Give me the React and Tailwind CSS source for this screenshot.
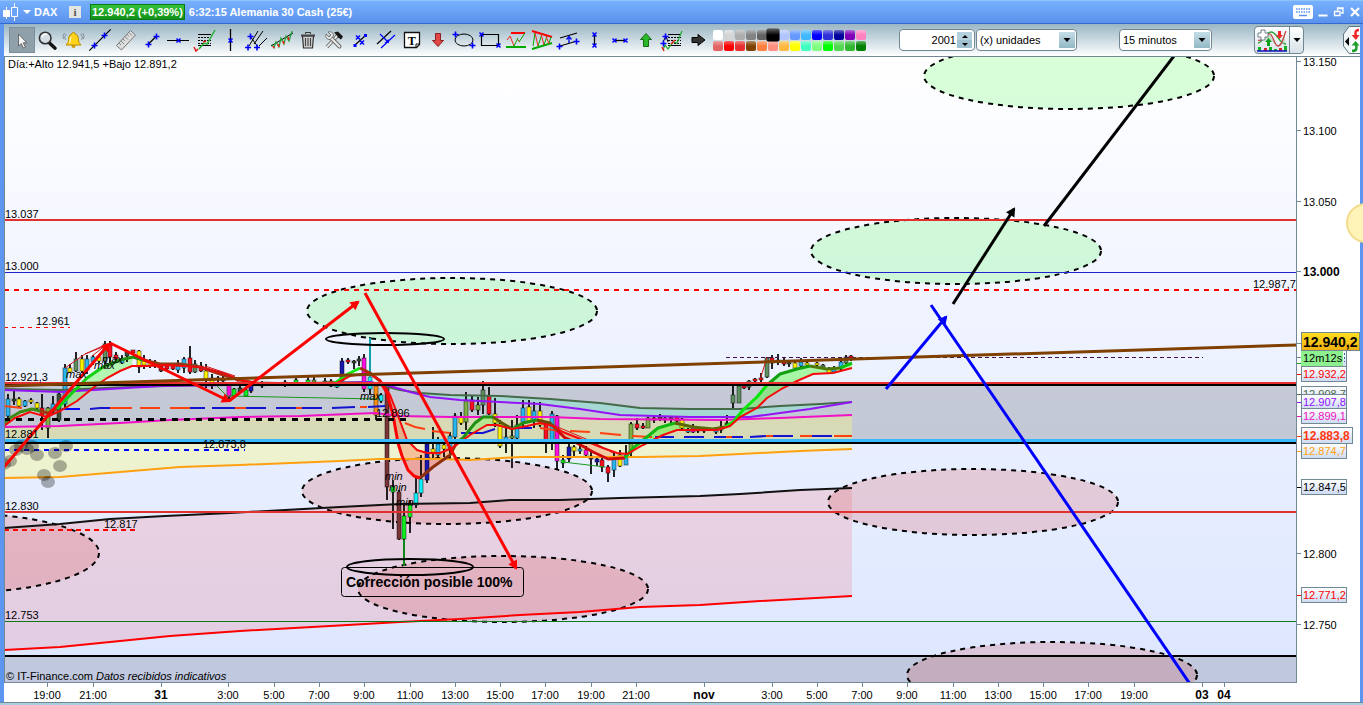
import {useState} from 'react';

const BLUE = '#0000ff';

function Plus({x, y}) {
    return <path d={`M${x - 3} ${y}h6M${x} ${y - 3}v6`} stroke={BLUE} strokeWidth="1.6" fill="none" />
}

function Cross({x, y}) {
    return <path d={`M${x - 2} ${y - 2}l4 4M${x + 2} ${y - 2}l-4 4`} stroke={BLUE} strokeWidth="1.5" fill="none" />
}

// Every icon is drawn on a 26 x 26 box
const tools = [
    {name: 'Seleccionar', icon: <path d="M9.5 7v12l2.8-2.4 2.2 4.6 2-1-2.2-4.4h3.6z" fill="#f4f4f4" stroke="#5c5c5c" strokeWidth=".9" />},
    {name: 'Zoom', icon: <>
        <path d="M14.5 16l5.6 5.2" stroke="#111" strokeWidth="3.4" strokeLinecap="round" />
        <circle cx="10.2" cy="11" r="5.8" fill="#d3dde3" stroke="#333" strokeWidth="1.6" />
        <path d="M7 10a4 4 0 0 1 5-2.6" stroke="#fff" strokeWidth="1.6" fill="none" />
    </>},
    {name: 'Alerta', icon: <>
        <circle cx="12.5" cy="19" r="2" fill="#d19c00" />
        <path d="M12.5 5.5c1 0 1.5.6 1.5 1.5 2.6.7 3.5 3 3.5 5.5 0 2.5.8 3.5 2.5 5.5h-15c1.700-2 2.500-3 2.500-5.500 0-2.500.9-4.800 3.500-5.500 0-.9.5-1.500 1.500-1.500z" fill="#ffd21c" stroke="#b88a00" />
        <path d="M10 10c-1 2-.5 4-1.500 6" stroke="#fff2a8" strokeWidth="1.500" fill="none" />
        <path d="M5.500 7l-2 3 1 3M19.500 7l2 3-1 3M3.500 6l-1.500 3 .5 3M21.500 6l1.500 3-.5 3" stroke="#68777f" fill="none" strokeWidth=".7" />
    </>},
    {name: 'Recta', icon: <><path d="M2.300 23.700L23.700 2.300" stroke="#000" strokeWidth="1.200" /><Plus x={7.5} y={18.5} /><Plus x={17.5} y={8.500} /></>},
    {name: 'Regla', icon: <>
        <path d="M3.500 18.500L17.500 3.500l5 4.500-14 15z" fill="#ddd" stroke="#777" />
        <path d="M6 16l2 2M8 14l3 3M10 12l2 2M12 9.500l3 3M14 7.500l2 2M16 5.500l3 3" stroke="#777" strokeWidth=".9" />
    </>},
    {name: 'Segmento', icon: <><path d="M9.500 17L17.500 9" stroke="#000" strokeWidth="1.200" /><Plus x={9.500} y={17.500} /><Plus x={17.500} y={9.500} /></>},
    {name: 'Horizontal', icon: <><path d="M2 13.500h22" stroke="#000" /><Cross x={13.500} y={13.500} /></>},
    {name: 'Fibonacci', icon: <>
        <path d="M7 7.500h13M7 18.500h13" stroke="#000" />
        <path d="M7 10.500h13M7 13.500h13M7 16.500h13" stroke="#000" strokeDasharray="2 1" />
        <path d="M8 22l5-6 3 1 4-7 4-7" stroke="#22b030" strokeWidth="1.500" fill="none" />
        <path d="M3 20l2 4 2-2M12 15l3-1" stroke="#e01818" strokeWidth="1.500" fill="none" />
    </>},
    {name: 'Vertical', icon: <><path d="M13.500 2v22" stroke="#000" strokeWidth="1.300" /><Cross x={13.500} y={13.500} /></>},
    {name: 'Tridente', icon: <>
        <path d="M6 19L15 4M11 17L20 4M16 19l8-8M7 9l8 11" stroke="#000" fill="none" />
        <Plus x={5} y={20.500} /><Plus x={14} y={20.500} /><Plus x={7.500} y={9.500} />
    </>},
    {name: 'Regresión', icon: <>
        <path d="M2 19L24 6" stroke="#000" />
        <path d="M3 17l2 4 2-6 3 5 2-9 3 6 2-8 3 5 3-10" stroke="#22a033" strokeWidth="1.200" fill="none" />
        <path d="M4 19l1 2M9 17l1 3M14 14l1 3M19 10l1 3" stroke="#f02020" strokeWidth="1.600" />
    </>},
    {name: 'Borrar', icon: <>
        <path d="M7.500 9h11l-1 12h-9z" fill="#ccc" stroke="#333" strokeWidth="1.200" />
        <path d="M6 8.500h14" stroke="#444" strokeWidth="2" /><path d="M10.500 7v-1.500h5v1.500" stroke="#333" fill="none" />
        <path d="M10.500 11v8M13 11v8M15.500 11v8" stroke="#444" strokeWidth="1.100" />
    </>},
    {name: 'Herramientas', icon: <>
        <path d="M6 20L17 8" stroke="#777" strokeWidth="3.600" /><path d="M6 20L17 8" stroke="#eee" strokeWidth="1.800" />
        <path d="M13 5.500l4-1 5 5-2 3-3-2-1-2z" fill="#161616" />
        <path d="M9.500 10.500l9 9" stroke="#666" strokeWidth="4" strokeLinecap="round" /><path d="M9.500 10.500l9 9" stroke="#e7e7e7" strokeWidth="2.200" strokeLinecap="round" />
        <path d="M5 7l3 3 2-2-3-3c3-1 6 1 5.500 4L9 12.500C6 13 4 10 5 7z" fill="#e4e4e4" stroke="#666" strokeWidth=".8" />
    </>},
    {name: 'Unir puntos', icon: <>
        <path d="M8 18L19 8" stroke="#000" strokeWidth="1.200" />
        <path d="M6.500 17h3v3h-3zM17 7h3v3h-3z" fill={BLUE} /><Cross x={11} y={10.500} /><Cross x={15} y={15.500} />
    </>},
    {name: 'Paralelas', icon: <>
        <path d="M4 17L18 4" stroke="#000" strokeWidth="1.200" /><path d="M8 21L22 8M7 7l8 8" stroke={BLUE} strokeWidth="1.200" />
        <path d="M16 16h-4.500l4-4z" fill={BLUE} />
    </>},
    {name: 'Texto', icon: <>
        <path d="M5.500 5.500h15v12l-3 3h-12z" fill="#fff" stroke="#111" strokeWidth="1.300" /><path d="M20.500 17h-3.500v3.500" fill="none" stroke="#111" />
        <text x="12.700" y="17.500" textAnchor="middle" fontSize="12" fontWeight="700" fontFamily="Liberation Serif, serif">T</text>
    </>},
    {name: 'Flecha abajo', icon: <path d="M10.500 6.500h5v7h3l-5.500 6-5.500-6h3z" fill="#e04848" stroke="#8c2020" />},
    {name: 'Elipse', icon: <><ellipse cx="13" cy="13" rx="9" ry="6" fill="none" stroke="#000" /><Plus x={4.500} y={7.500} /><Plus x={21.500} y={18.500} /></>},
    {name: 'Rectángulo', icon: <><path d="M4.500 7.500h17v11h-17z" fill="none" stroke="#000" strokeWidth="1.200" /><Cross x={4.500} y={7.500} /><Cross x={21.500} y={18.500} /></>},
    {name: 'Canal', icon: <>
        <path d="M8 6h14" stroke="#f00" strokeWidth="2" /><path d="M3 20h20" stroke="#0a0" strokeWidth="2" />
        <path d="M4 13l3-4 4 10M14 12l3 3" stroke="#e22" fill="none" /><path d="M11 19l4-8M16 15l6-9" stroke="#0a0" fill="none" />
    </>},
    {name: 'Triángulo', icon: <>
        <path d="M3 4l20 6" stroke="#f00" strokeWidth="2" /><path d="M3 22l20-6" stroke="#0a0" strokeWidth="2" />
        <path d="M4 19L6 6M9 19l4-12M15 18l3-9M20 16l2-6" stroke="#0a0" /><path d="M6 6l3 13M12 7l3 11M17 9l3 8" stroke="#e22" />
    </>},
    {name: 'Canal paralelo', icon: <>
        <path d="M5 11L22 6M5 19L22 14" stroke="#000" strokeWidth="1.200" /><path d="M14 16v-5M11.500 12.500L14 9.500l2.500 3" stroke={BLUE} fill="none" strokeWidth="1.300" />
        <Plus x={4.500} y={19.500} /><Plus x={21.500} y={14.500} />
    </>},
    {name: 'Medir vertical', icon: <><path d="M13.500 7v12" stroke="#000" strokeWidth="1.300" /><Cross x={13.500} y={7.500} /><Cross x={13.500} y={18.500} /></>},
    {name: 'Medir horizontal', icon: <><path d="M8 13.500h11" stroke="#000" strokeWidth="1.300" /><Cross x={7.500} y={13.500} /><Cross x={18.500} y={13.500} /></>},
    {name: 'Flecha arriba', icon: <path d="M10.500 19.500h5v-7h3L13 6.500l-5.500 6h3z" fill="#28b828" stroke="#126a12" />},
    {name: 'Retrocesos', icon: <>
        <path d="M9 7.500h13M9 18.500h13" stroke="#000" /><path d="M9 10.500h13M9 13.500h13M9 16.500h13" stroke="#000" strokeDasharray="2 1" />
        <path d="M4 15l3-6 2 6" stroke="#000" fill="none" /><path d="M4 23l2-5 3 4 5-7 4 1 5-12" stroke="#1cab2c" strokeWidth="1.200" fill="none" />
        <path d="M3 20l2 4M12 17l4-4" stroke="#e22" strokeWidth="1.500" /><Plus x={6.500} y={9.500} /><Plus x={4.500} y={16.500} />
    </>},
    {name: 'Flecha derecha', icon: <path d="M7 10.500h6v-3l7 5.500-7 5.500v-3H7z" fill="#333" stroke="#000" />},
];

const palette = [
    '#ffffff', '#d4d4d4', '#adadad', '#828282', '#636363', '#000000', '#b0c4ff', '#6699ff', '#40b8ff', '#0000ff', '#3030d8', '#00009c', '#8000b8', '#ff80c0',
    '#e06464', '#ff0000', '#e83030', '#804000', '#ff8040', '#ff9080', '#ffb840', '#ffff00', '#40ffc0', '#80ff80', '#00ff00', '#50d850', '#30b830', '#008000',
];

// x, high, low, body top, body bottom, colour
const Y = '#ffef00', B = '#29b6f0', R = '#ff1020', G = '#5f8f60', D = '#3a5038', O = '#7cb040', M = '#ff10e0', N = '#1818b0', C = '#10f0f8', L = '#10f020', W = '#7a3438', A = '#ff9010';
const candles = [
    [8, 394, 418, 399, 416, B], [14, 390, 405, 399, 401, D], [19, 397, 407, 399, 406, Y], [25, 400, 407, 401, 406, B], [31, 398, 404, 400, 402, Y],
    [37, 402, 410, 403, 408, Y], [42, 394, 430, 408, 415, R], [48, 407, 438, 408, 428, O], [53, 396, 414, 404, 412, B], [59, 393, 422, 394, 420, D],
    [65, 364, 410, 368, 404, B], [70, 364, 373, 368, 372, Y], [76, 352, 372, 359, 371, G], [82, 355, 373, 359, 371, Y], [87, 355, 374, 359, 370, B],
    [93, 355, 365, 357, 362, B], [99, 355, 363, 357, 361, Y], [105, 341, 368, 344, 361, G], [110, 341, 363, 345, 357, R], [116, 352, 361, 355, 359, R],
    [122, 355, 364, 359, 363, B], [127, 350, 362, 352, 356, D], [133, 350, 354, 350, 353, R], [139, 350, 373, 351, 367, Y], [144, 355, 369, 360, 365, Y],
    [150, 359, 368, 362, 365, Y], [155, 360, 368, 363, 366, D], [161, 363, 372, 366, 371, W], [167, 363, 371, 366, 369, R], [173, 364, 370, 366, 369, R],
    [178, 360, 373, 366, 370, B], [184, 357, 373, 359, 368, B], [190, 346, 374, 358, 372, R], [195, 360, 373, 364, 372, G], [201, 362, 372, 366, 371, R],
    [206, 364, 388, 371, 380, Y], [212, 374, 389, 378, 384, Y], [218, 376, 382, 378, 380, B], [223, 376, 386, 379, 381, D], [229, 384, 401, 385, 397, M],
    [234, 388, 398, 389, 396, L], [240, 384, 394, 388, 392, D], [246, 387, 397, 390, 396, L], [251, 383, 393, 385, 391, N], [262, 381, 388, 383, 386, Y],
    [285, 380, 387, 382, 385, M], [296, 377, 386, 380, 383, L], [308, 375, 385, 380, 383, L], [314, 377, 385, 380, 382, O], [325, 378, 385, 381, 383, G],
    [331, 379, 387, 381, 386, A], [337, 383, 388, 385, 387, C], [342, 358, 382, 361, 381, N], [348, 358, 364, 360, 362, R], [354, 360, 369, 361, 363, D],
    [359, 356, 366, 359, 361, D], [364, 354, 392, 358, 389, M], [370, 337, 395, 377, 389, C], [376, 383, 420, 386, 415, A], [381, 393, 403, 395, 401, C],
    [387, 385, 500, 386, 487, W], [393, 480, 529, 487, 492, L], [399, 490, 540, 492, 539, W], [404, 505, 566, 516, 539, L], [410, 500, 533, 505, 517, L],
    [416, 478, 508, 493, 505, C], [421, 455, 497, 479, 493, C], [427, 443, 483, 444, 480, N], [433, 427, 458, 449, 452, Y], [438, 437, 460, 444, 455, B],
    [444, 440, 457, 445, 449, Y], [450, 432, 460, 436, 450, B], [455, 413, 440, 416, 437, B], [461, 412, 425, 417, 423, Y], [466, 392, 430, 401, 422, O],
    [472, 395, 412, 400, 410, R], [478, 397, 415, 405, 410, O], [483, 381, 414, 390, 405, G], [489, 387, 415, 396, 414, R], [495, 398, 427, 414, 423, Y],
    [500, 420, 448, 424, 446, Y], [506, 425, 453, 437, 443, B], [512, 420, 468, 436, 438, O], [517, 415, 439, 425, 438, B], [523, 400, 428, 408, 422, B],
    [529, 400, 422, 407, 421, Y], [534, 402, 428, 411, 420, B], [540, 402, 427, 411, 425, Y], [546, 421, 453, 423, 443, R], [552, 411, 450, 414, 440, B],
    [557, 415, 470, 416, 461, M], [563, 455, 468, 460, 463, L], [569, 443, 462, 447, 459, N], [574, 445, 456, 447, 451, Y], [580, 445, 454, 449, 451, B],
    [586, 446, 458, 450, 455, M], [591, 450, 474, 456, 459, W], [597, 457, 466, 459, 462, N], [602, 456, 472, 460, 467, R], [608, 465, 482, 467, 473, R],
    [614, 452, 477, 459, 470, B], [620, 450, 467, 455, 466, Y], [626, 445, 465, 455, 465, B], [631, 422, 457, 424, 452, O], [637, 418, 430, 424, 428, R],
    [643, 423, 429, 426, 428, R], [648, 417, 428, 418, 428, O], [654, 416, 423, 418, 420, R], [660, 414, 421, 417, 419, W], [665, 416, 423, 418, 420, M],
    [671, 416, 423, 417, 419, W], [677, 416, 425, 417, 421, R], [682, 418, 430, 419, 428, Y], [688, 428, 433, 430, 432, B], [693, 424, 433, 428, 432, M],
    [698, 427, 433, 429, 431, W], [704, 427, 433, 429, 431, D], [716, 427, 434, 429, 432, B], [721, 421, 433, 427, 430, O], [727, 415, 427, 423, 425, D],
    [733, 385, 409, 395, 403, G], [739, 385, 403, 386, 403, G], [744, 385, 389, 386, 388, R], [749, 380, 390, 381, 387, G], [755, 378, 382, 379, 381, R],
    [761, 373, 382, 378, 380, R], [767, 357, 378, 358, 377, G], [772, 355, 369, 358, 363, R], [778, 354, 365, 360, 362, D], [784, 357, 366, 362, 364, R],
    [789, 361, 367, 362, 364, D], [795, 361, 370, 363, 368, Y], [801, 358, 368, 362, 366, B], [807, 362, 366, 363, 365, Y], [817, 362, 367, 363, 365, Y],
    [823, 364, 369, 365, 367, G], [829, 367, 374, 369, 373, Y], [834, 366, 373, 369, 372, B], [841, 360, 370, 362, 368, B], [846, 355, 364, 357, 363, G],
    [851, 355, 361, 356, 358, R],
];

const slowGreen = [[4, 389], [60, 390], [130, 387], [240, 384], [370, 382], [380, 385], [400, 390], [420, 393], [450, 395], [500, 396], [550, 399], [600, 403], [640, 408], [690, 409], [740, 409], [780, 406], [820, 404], [852, 402]];
const slowPurple = [[4, 390], [60, 392], [110, 389], [160, 386], [230, 385], [300, 384], [370, 382], [390, 386], [410, 392], [430, 397], [460, 400], [500, 402], [540, 404], [580, 409], [620, 415], [690, 417], [750, 417], [780, 413], [810, 409], [852, 402]];
const magenta = [[4, 427], [60, 426], [120, 423], [170, 420], [240, 417], [300, 416], [350, 414], [375, 413], [400, 416], [450, 417], [550, 417], [600, 419], [720, 420], [780, 418], [852, 415]];
const orange = [[4, 478], [60, 477], [120, 472], [180, 467], [240, 465], [340, 461], [380, 459], [440, 459], [470, 460], [520, 457], [640, 457], [700, 456], [740, 454], [800, 451], [852, 449]];
const blackAvg = [[4, 528], [60, 524], [110, 519], [165, 516], [230, 513], [340, 507], [400, 504], [470, 503], [510, 500], [560, 500], [620, 498], [700, 496], [740, 494], [800, 490], [852, 488]];
const redAvg = [[4, 650], [60, 647], [120, 641], [170, 636], [240, 631], [330, 626], [400, 622], [460, 619], [520, 615], [580, 612], [640, 607], [700, 605], [760, 601], [852, 596]];

// fast average, cut where its colour changes
const fast = [
    {color: '#3c8a10', pts: [[4, 425], [10, 418], [20, 412], [32, 409], [40, 411]]},
    {color: '#a03c10', pts: [[40, 411], [48, 413], [57, 409]]},
    {color: '#10d010', pts: [[57, 409], [72, 393], [87, 378], [103, 367]]},
    {color: '#209010', pts: [[103, 367], [120, 360], [133, 357], [143, 360]]},
    {color: '#8c3c10', pts: [[143, 360], [160, 364], [180, 364], [200, 367], [217, 373], [240, 380], [255, 383], [300, 384], [335, 383]]},
    {color: '#10e810', pts: [[335, 383], [348, 374], [360, 368]]},
    {color: '#a03010', pts: [[360, 368], [370, 373], [380, 381]]},
    {color: '#ff0000', pts: [[380, 381], [387, 393], [393, 415], [398, 443], [402, 456], [408, 470], [414, 476], [420, 478]]},
    {color: '#8c3010', pts: [[420, 478], [433, 467], [450, 455], [457, 442]]},
    {color: '#209010', pts: [[457, 442], [463, 438], [475, 423], [483, 417], [493, 417]]},
    {color: '#5c5c08', pts: [[493, 417], [502, 423], [512, 429]]},
    {color: '#209010', pts: [[512, 429], [523, 423], [537, 420]]},
    {color: '#6c4808', pts: [[537, 420], [550, 423], [557, 430]]},
    {color: '#d00808', pts: [[557, 430], [565, 438], [577, 443], [593, 452], [608, 459], [625, 458]]},
    {color: '#10b810', pts: [[625, 458], [633, 448], [647, 437], [658, 428], [675, 423]]},
    {color: '#5c6808', pts: [[675, 423], [693, 427], [713, 429], [725, 427]]},
    {color: '#08e808', pts: [[725, 427], [733, 422], [743, 410], [757, 397], [767, 385]]},
    {color: '#10a010', pts: [[767, 385], [780, 374], [797, 369], [810, 366]]},
    {color: '#507808', pts: [[810, 366], [827, 369], [840, 368]]},
    {color: '#10c010', pts: [[840, 368], [852, 363]]},
];
const fastRed = [[4, 426], [15, 418], [30, 412], [47, 417], [60, 411], [77, 401], [93, 388], [107, 378], [120, 371], [132, 366], [147, 366], [167, 365], [200, 367], [223, 373], [240, 380], [255, 383], [335, 384], [350, 376], [368, 373], [380, 380], [390, 395], [397, 413], [407, 440], [417, 450], [427, 453], [440, 453], [452, 448], [470, 435], [487, 425], [497, 425], [512, 429], [527, 426], [540, 423], [553, 426], [563, 432], [583, 440], [603, 448], [617, 453], [627, 454], [643, 445], [663, 435], [677, 430], [717, 430], [730, 426], [740, 417], [757, 408], [767, 398], [783, 388], [797, 381], [813, 374], [833, 373], [852, 368]];

const pulse = [
    ['#ff4010', '4,406 22,408'], [BLUE, '62,409 80,409'], ['#1414d0', '90,409 100,408 110,408'], ['#ff4010', '110,408 132,408'], ['#ff4010', '140,408 160,408'],
    ['#ff4010', '170,408 190,408'], ['#1414d0', '190,408 205,408'], ['#1414d0', '212,408 235,408'], ['#ff4010', '235,408 246,408'], ['#1414d0', '246,408 266,408'],
    ['#1414d0', '276,408 296,408'], ['#ff4010', '296,408 302,408'], ['#1414d0', '302,408 322,408'], ['#1414d0', '332,408 355,407'], ['#ff4010', '360,407 367,407'],
    ['#1414d0', '368,407 385,406'], ['#ff4010', '405,423 415,427 425,429'], ['#ff4010', '432,431 450,433'], ['#1414d0', '461,433 483,433 495,429'],
    ['#1414d0', '508,428 532,428'], ['#ff4010', '540,428 560,431'], ['#ff4010', '570,431 590,432'], ['#ff4010', '600,433 621,435'], ['#ff4010', '632,436 652,437'],
    ['#1414d0', '655,437 674,437'], ['#1414d0', '684,437 704,437'], ['#1414d0', '714,437 726,437'], ['#ff4010', '726,437 732,437'], ['#1414d0', '732,437 743,437'],
    ['#1414d0', '750,437 766,436'], ['#ff4010', '766,436 773,436'], ['#1414d0', '773,436 793,436'], ['#ff4010', '800,436 812,436'], ['#1414d0', '812,436 832,436'],
    ['#ff4010', '834,436 852,436'],
];

const ellipses = [
    {cx: 1069, cy: 76, ry: 33, fill: '#40ff40'},
    {cx: 956, cy: 251, ry: 33, fill: '#40ff40'},
    {cx: 452, cy: 311, ry: 33, fill: '#40ff40'},
    {cx: 447, cy: 491, ry: 33, fill: '#d84040'},
    {cx: 503, cy: 589, ry: 33, fill: '#d84040'},
    {cx: -46, cy: 553, ry: 40, fill: '#d84040'},
    {cx: 973, cy: 502, ry: 33, fill: '#d84040'},
    {cx: 1052, cy: 675, ry: 33, fill: '#d84040'},
];

const smudges = [[4, 464], [10, 461], [16, 450], [21, 446], [27, 449], [32, 446], [37, 455], [55, 453], [66, 446], [60, 466], [44, 475], [48, 482]];

const lineLabels = [
    ['13.037', 5, 218], ['13.000', 5, 270], ['12.961', 36, 325], ['12.921,3', 5, 381], ['12.881', 5, 438], ['12.873,8', 203, 448],
    ['12.830', 5, 510], ['12.817', 104, 528], ['12.753', 5, 619], ['12.896', 376, 417], ['12.987,7', 1253, 288],
];

const marks = [['max', 66, 378], ['max', 94, 369], ['max', 102, 363], ['max', 360, 400], ['min', 385, 480], ['min', 389, 491], ['min', 396, 506]];

const hours = [
    [47, '19:00'], [93, '21:00'], [161, '31', true], [228, '3:00'], [274, '5:00'], [319, '7:00'], [364, '9:00'], [410, '11:00'], [455, '13:00'], [500, '15:00'],
    [545, '17:00'], [591, '19:00'], [636, '21:00'], [704, 'nov', true], [772, '3:00'], [817, '5:00'], [862, '7:00'], [907, '9:00'], [953, '11:00'], [998, '13:00'],
    [1043, '15:00'], [1088, '17:00'], [1134, '19:00'], [1202, '03', true], [1224, '04', true],
];

const prices = [[62, '13.150'], [131, '13.100'], [202, '13.050'], [272, '13.000', true], [554, '12.800'], [625, '12.750']];

const tags = [
    {y: 386, text: '12.908,7', color: '#4c6a4c'},
    {y: 394, text: '12.907,8', color: '#9010ff'},
    {y: 408, text: '12.899,1', color: '#f010c0'},
    {y: 443, text: '12.874,7', color: '#ffa010'},
    {y: 479, text: '12.847,5', color: '#000'},
    {y: 587, text: '12.771,2', color: '#ff0000'},
    {y: 366, text: '12.932,2', color: '#ff0000'},
];

const line = (pts) => pts.map((p) => p.join(',')).join(' ');
const between = (a, b) => line([...a, ...[...b].reverse()]);
const fastAll = fast.flatMap((f) => f.pts);
const part = (pts, from, to) => pts.filter((p) => p[0] >= from && p[0] <= to);

function Arrow({x1, y1, x2, y2, color}) {
    const a = Math.atan2(y2 - y1, x2 - x1) * 180 / Math.PI;
    return (
        <g stroke={color} fill={color}>
            <path d={`M${x1} ${y1}L${x2} ${y2}`} strokeWidth="3" />
            <path d="M2 0l-9-5v10z" stroke="none" transform={`translate(${x2} ${y2}) rotate(${a})`} />
        </g>
    )
}

function Plot() {
    return (
        <g clipPath="url(#plot)">
            <rect x="4" y="57" width="1293" height="625" fill="url(#sky)" />

            <path d="M4 385h1293v57H4z" fill="#000" fillOpacity=".16" />
            <path d="M4 656h1293v27H4z" fill="#000" fillOpacity=".13" />
            <polygon points={between(blackAvg, redAvg)} fill="#ff1010" fillOpacity=".12" />
            <polygon points={between(magenta, orange)} fill="#fafa7b" fillOpacity=".36" />
            <polygon points={between(slowGreen, slowPurple)} fill="#80e8d0" fillOpacity=".45" />
            {ellipses.map((e) => (
                <ellipse key={`${e.cx}-${e.cy}`} cx={e.cx} cy={e.cy} rx="145" ry={e.ry} fill={e.fill} fillOpacity=".2" stroke="#000" strokeWidth="2" strokeDasharray="5 5" />
            ))}

            <polygon points={between(part(fastAll, 60, 140), part(fastRed, 60, 140))} fill="#60ff40" fillOpacity=".4" />
            <polygon points={between(part(fastAll, 387, 450), part(fastRed, 387, 452))} fill="#ff5020" fillOpacity=".3" />
            <polygon points={between(part(fastAll, 470, 512), part(fastRed, 470, 512))} fill="#60ff40" fillOpacity=".3" />
            <polygon points={between(part(fastAll, 557, 627), part(fastRed, 557, 627))} fill="#ff5020" fillOpacity=".25" />
            <polygon points={between(part(fastAll, 633, 852), part(fastRed, 633, 852))} fill="#40ff20" fillOpacity=".4" />

            <g>
                {candles.map(([x, hi, lo, top, bottom, color]) => (
                    <g key={x}>
                        <path d={`M${x} ${hi}V${lo}`} stroke="#000" strokeOpacity=".85" strokeWidth="2" />
                        <rect x={x - 2} y={top} width="4" height={Math.max(bottom - top, 2)} fill={color} stroke="#000" strokeOpacity=".45" />
                    </g>
                ))}
                <path d="M370 338V377" stroke="#10a0a8" strokeWidth="2" /><path d="M404 540v26" stroke="#108818" strokeWidth="2" />
            </g>

            <g fill="none" strokeWidth="2">
                {pulse.map(([color, pts]) => <polyline key={pts} points={pts} stroke={color} />)}
                <polyline points={line(slowGreen)} stroke="#446a48" />
                <polyline points={line(slowPurple)} stroke="#9414f8" />
                <polyline points={line(magenta)} stroke="#f010c8" />
                <polyline points={line(orange)} stroke="#ffa010" />
                <polyline points={line(blackAvg)} stroke="#111" />
                <polyline points={line(redAvg)} stroke="#ff0000" />
                {fast.map((f) => <polyline key={f.pts[0][0]} points={line(f.pts)} stroke={f.color} strokeWidth="3" strokeLinejoin="round" />)}
                <polyline points={line(fastRed)} stroke="#f80808" />
                <path d="M213 382l14 14 151 3M563 462l42 5" stroke="#189818" strokeWidth="1" />
                <path d="M65 368l20-14 25-10M85 354l20-9M92 356l14-11M100 355l6-10M200 366l28 9 12 8M205 366l30 10M195 366l45 15M760 380l7-23M553 425l40 17 20 11" stroke="#d01818" strokeWidth="1" />
            </g>

            <path d="M4 220H1297M4 512H1297" stroke="#e03030" strokeWidth="2" />
            <path d="M4 272.500H1297" stroke="#2020d0" />
            <path d="M4 290H1297" stroke="#ff0000" strokeWidth="2" strokeDasharray="5 5" />
            <path d="M4 327.500H70" stroke="#ff0000" strokeDasharray="4 4" />
            <path d="M4 530H138" stroke="#ff0000" strokeWidth="2" strokeDasharray="5 4" />
            <path d="M4 450H245" stroke="#0000ff" strokeWidth="2" strokeDasharray="5 5" />
            <path d="M4 419.500H408" stroke="#000" strokeWidth="3" strokeDasharray="6 6" />
            <path d="M726 357.500H1203" stroke="#401050" strokeDasharray="4 3" />
            <path d="M4 621.500H1297" stroke="#107818" />
            <path d="M4 656H1297" stroke="#000" strokeWidth="2" />
            <path d="M4 383H1297" stroke="#e83030" strokeWidth="2" />
            <path d="M4 385H1297M4 443H1297" stroke="#000" strokeWidth="2" />
            <path d="M4 440.500H1297" stroke="#38b8ff" strokeWidth="3" />
            <path d="M4 386L1297 345" stroke="#804000" strokeWidth="3" />

            {smudges.map(([x, y]) => <ellipse key={`${x}-${y}`} cx={x} cy={y} rx="7" ry="6" fill="#000" fillOpacity=".3" />)}

            <ellipse cx="385" cy="339" rx="59" ry="6" fill="none" stroke="#000" strokeWidth="2" />
            <ellipse cx="410" cy="567" rx="63" ry="8" fill="none" stroke="#000" strokeWidth="2" />
            <rect x="341.500" y="567.500" width="182" height="29" rx="3" fill="none" stroke="#000" />
            <text x="346" y="587" fontSize="14" fontWeight="700">Corrección posible 100%</text>

            <Arrow x1={4} y1={467} x2={109} y2={344} color="#ff0000" />
            <Arrow x1={110} y1={343} x2={229} y2={401} color="#ff0000" />
            <Arrow x1={229} y1={401} x2={358} y2={302} color="#ff0000" />
            <Arrow x1={365} y1={293} x2={516} y2={568} color="#ff0000" />
            <Arrow x1={886} y1={389} x2={946} y2={317} color="#0000ff" />
            <Arrow x1={953} y1={304} x2={1014} y2={209} color="#000" />
            <path d="M931 305L1190 684" stroke="#0000ff" strokeWidth="3" />
            <path d="M1044 226L1174 56" stroke="#000" strokeWidth="3" />

            <g fontSize="11">
                {lineLabels.map(([text, x, y]) => <text key={text} x={x} y={y}>{text}</text>)}
                {marks.map(([text, x, y]) => <text key={`${x}-${y}`} x={x} y={y} fontStyle="italic">{text}</text>)}
                <text x="8" y="68">Día:+Alto 12.941,5 +Bajo 12.891,2</text>
                <text x="6" y="680">© IT-Finance.com</text>
                <text x="96" y="680" fontStyle="italic">Datos recibidos indicativos</text>
            </g>
        </g>
    )
}

function Chart() {
    return (
        <svg viewBox="4 57 1356 645" className="block w-full overflow-visible bg-white" fontFamily="Liberation Sans, Arial, sans-serif" role="img" aria-label="DAX 15 minutos">
            <defs>
                <clipPath id="plot"><rect x="4" y="57" width="1293" height="625" /></clipPath>
                <linearGradient id="sky" x2="0" y2="1">
                    <stop offset="0" stopColor="#ffffff" /><stop offset=".4" stopColor="#f0f4ff" /><stop offset="1" stopColor="#dce6ff" />
                </linearGradient>
                <linearGradient id="gold" x2="0" y2="1"><stop offset="0" stopColor="#ffe020" /><stop offset="1" stopColor="#f0ae10" /></linearGradient>
                <linearGradient id="tag" x2="0" y2="1"><stop offset="0" stopColor="#ffffff" /><stop offset="1" stopColor="#cddaf2" /></linearGradient>
            </defs>
            <Plot />

            <path d="M4.500 57V682M4 682.500H1297M1296.500 57V683" stroke="#728894" fill="none" />

            <g fontSize="11">
                {hours.map(([x, text, bold]) => (
                    <g key={x}>
                        <path d={`M${x + 0.5} 683v4`} stroke="#728894" />
                        <text x={x} y="699" textAnchor="middle" fontWeight={bold ? 700 : 400} fontSize={bold ? 12 : 11}>{text}</text>
                    </g>
                ))}
                {prices.map(([y, text, bold]) => (
                    <g key={text}>
                        <path d={`M1297 ${y - 0.5}h4`} stroke="#728894" />
                        <text x="1303" y={y + 4} fontWeight={bold ? 700 : 400} fontSize={bold ? 12 : 11}>{text}</text>
                    </g>
                ))}
                {tags.map((t) => (
                    <g key={t.text}>
                        <path d={`M1297 ${t.y + 8.5}h4`} stroke={t.color} />
                        <rect x="1301.500" y={t.y + 0.5} width="45" height="15" fill="url(#tag)" stroke="#728894" />
                        <text x="1303" y={t.y + 12} fill={t.color}>{t.text}</text>
                    </g>
                ))}
                <path d="M1297 436.500h4" stroke="#ff3810" />
                <rect x="1301.500" y="427.500" width="51" height="16" fill="url(#tag)" stroke="#728894" />
                <text x="1303" y="440" fill="#ff3810" fontSize="12" fontWeight="700">12.883,8</text>
                <rect x="1301.500" y="350.500" width="45" height="16" fill="url(#tag)" stroke="#728894" />
                <path d="M1344.500 353v9" stroke="#2868a0" strokeDasharray="2 2" />
                <rect x="1301" y="350" width="42" height="16" fill="#8ff08f" />
                <text x="1303" y="362">12m12s</text>
                <path d="M1297 343.500h4M1297 357.500h4" stroke="#728894" />
                <path d="M1297 363.500h4" stroke="#10a010" />
                <rect x="1301.500" y="332.500" width="58" height="18" fill="url(#gold)" stroke="#728894" />
                <text x="1303" y="347" fontSize="14" fontWeight="700">12.940,2</text>
            </g>
            <circle cx="1366" cy="223" r="19" fill="#fff3b8" stroke="#f3dc90" strokeWidth="2" />
        </svg>
    )
}

function TitleBar() {
    return (
        <header className="flex h-6 items-center border-t border-b border-t-[#8fc4f8] border-b-[#3567d0] bg-linear-to-b from-[#78b0ff] to-[#5a92ec] pr-0.5 pl-[3px] text-[11px] font-bold text-white">
            <svg viewBox="0 0 16 18" className="h-[18px] w-4" aria-hidden="true">
                <path d="M3.500 4v12M11.500 0v18" stroke="#fff" /><path d="M.500 7.500h6v6h-6z" fill="#fff" stroke="#fff" /><path d="M8.500 4.500h6v9h-6z" fill="#6aa2f6" stroke="#fff" />
            </svg>
            <button aria-label="Elegir valor" className="flex h-4 w-[15px] items-center justify-center">
                <svg viewBox="0 0 8 4" className="h-1 w-2"><path d="M0 0h8L4 4z" fill="#fff" /></svg>
            </button>
            <span className="w-[35px]">DAX</span>
            <button aria-label="Información" className="mr-[9px] flex h-3 w-3 items-center justify-center bg-[#e4e4e0] font-['Liberation_Serif',serif] text-[11px] leading-3 text-[#555]">i</button>
            <span className="mr-1 flex h-4 items-center border border-[#0b7a10] bg-linear-to-b from-[#34c43c] to-[#129018] px-px whitespace-nowrap">12.940,2 (+0,39%)</span>
            <span className="whitespace-nowrap">6:32:15 Alemania 30 Cash (25€)</span>
            <div className="ml-auto flex items-center gap-1">
                <button aria-label="Teclado">
                    <svg viewBox="0 0 20 14" className="h-[14px] w-5">
                        <rect width="20" height="14" rx="2" fill="#fff" />
                        <path d="M3 4h14M3 7h14" stroke="#5a92ec" strokeWidth="1.500" strokeDasharray="1.500 1" /><path d="M6 10.500h8" stroke="#5a92ec" strokeWidth="1.500" />
                    </svg>
                </button>
                <button aria-label="Minimizar"><svg viewBox="0 0 12 12" className="size-3"><path d="M1.500 9.500h9" stroke="#fff" strokeWidth="2" /></svg></button>
                <button aria-label="Restaurar">
                    <svg viewBox="0 0 12 12" className="size-3"><path d="M4.500 5V2h5.500v5H8M1.500 5.500h5.500v4H1.500zM4 2.500h6M1 5.500h6.500" stroke="#fff" strokeWidth="1.300" fill="none" /></svg>
                </button>
                <button aria-label="Cerrar"><svg viewBox="0 0 12 12" className="size-3"><path d="M2 2l8 8M10 2l-8 8" stroke="#fff" strokeWidth="2.200" /></svg></button>
            </div>
        </header>
    )
}

function Picker({label, value, options, onChange, classes}) {
    return (
        <div className={`relative h-[22px] ${classes}`}>
            <select
                aria-label={label}
                value={value}
                onChange={(e) => onChange(e.target.value)}
                className="block h-full w-full appearance-none rounded-sm border border-[#708894] bg-white pr-5 pl-[3px] text-[11px]"
            >
                {options.map((o) => <option key={o}>{o}</option>)}
            </select>
            <span className="pointer-events-none absolute top-[3px] right-0.5 flex h-4 w-4 items-center justify-center bg-linear-to-b from-[#c4dde6] to-[#94b8c6]">
                <svg viewBox="0 0 8 4" className="h-1 w-2"><path d="M.5 0h7L4 4z" /></svg>
            </span>
        </div>
    )
}

function Toolbar() {
    const [tool, setTool] = useState('Seleccionar');
    const [color, setColor] = useState('#000000');
    const [units, setUnits] = useState(2001);
    const [unit, setUnit] = useState('(x) unidades');
    const [frame, setFrame] = useState('15 minutos');

    return (
        <div className="flex h-[33px] items-center border-b border-[#728894] bg-linear-to-b from-[#9ab6c4] to-white pl-[5px]">
            <div className="flex shrink-0">
                {tools.map((t) => (
                    <button
                        key={t.name}
                        aria-label={t.name}
                        onClick={() => setTool(t.name)}
                        className={tool === t.name ? 'bg-[#8fa0aa] outline-1 -outline-offset-1 outline-[#7c909c]' : ''}
                    >
                        <svg viewBox="0 0 26 26" className="size-[26px]">{t.icon}</svg>
                    </button>
                ))}
            </div>

            <div className="ml-0.5 grid shrink-0 grid-cols-[repeat(14,10px)] gap-px">
                {palette.map((c) => (
                    <button
                        key={c}
                        aria-label={`Color ${c}`}
                        onClick={() => setColor(c)}
                        className={`h-[10px] rounded-[2px] bg-linear-to-b from-white/40 to-transparent to-50% ${color === c ? 'z-10 scale-135' : ''}`}
                        style={{backgroundColor: c}}
                    />
                ))}
            </div>

            <div className="ml-[33px] flex h-[22px] w-[76px] shrink-0 items-center rounded-sm border border-[#708894] bg-white pr-0.5">
                <input
                    aria-label="Número de unidades"
                    value={units}
                    onChange={(e) => setUnits(Number(e.target.value) || 0)}
                    className="w-full min-w-0 pr-px text-right text-[11px] outline-none"
                />
                <div className="flex flex-col">
                    <button aria-label="Más" onClick={() => setUnits(units + 1)} className="flex h-2 w-[15px] items-center justify-center bg-[#b4d0dc]">
                        <svg viewBox="0 0 6 3" className="h-[3px] w-[6px]"><path d="M0 3h6L3 0z" /></svg>
                    </button>
                    <button aria-label="Menos" onClick={() => setUnits(units - 1)} className="flex h-2 w-[15px] items-center justify-center bg-[#9fc0ce]">
                        <svg viewBox="0 0 6 3" className="h-[3px] w-[6px]"><path d="M0 0h6L3 3z" /></svg>
                    </button>
                </div>
            </div>
            <Picker label="Unidad" value={unit} onChange={setUnit} options={['(x) unidades', 'días']} classes="ml-px w-[101px] shrink-0" />
            <Picker label="Intervalo" value={frame} onChange={setFrame} options={['15 minutos', '1 hora']} classes="ml-[42px] w-[93px] shrink-0" />

            <div className="ml-[42px] flex h-7 shrink-0 rounded-sm border border-[#708894] bg-linear-to-b from-white to-[#d8e2e8]">
                <button aria-label="Indicadores" className="border-r border-[#708894]">
                    <svg viewBox="0 0 34 26" className="h-[26px] w-[34px]">
                        <path d="M3 16C8 16 10 5 16 5s8 12 15 12" stroke="#28a038" strokeWidth="1.300" fill="none" />
                        <path d="M10 8c3-2 5-1 7 3l4 7c-5-5-9-7-14-5zM24 17c2 0 4-5 6-12v11z" fill="#b0d8b0" fillOpacity=".7" />
                        <path d="M3 13c5 3 8-8 12-6s4 12 8 12 5-8 8-15" stroke="#c04048" strokeWidth="1.300" fill="none" />
                        <path d="M6 3h4v3h3v4h-3v3H6v-3H3V6h3z" fill="#fff" stroke="#70808a" />
                        <path d="M12 19v-4h-2l3.500-4 3.500 4h-2v4z" fill="#10a020" /><path d="M23 4v4h-2l3.500 4L28 8h-2V4z" fill="#f02828" />
                        <path d="M3 24v-4h3v4M14 24v-4h3v4M29 24v-5h3v5M19 24v-2h3v2" fill="#10b020" /><path d="M9 24v-3h3v3M24 24v-3h3v3" fill="#d02828" />
                        <path d="M2 24h30" stroke="#1010c0" strokeWidth="1.500" />
                    </svg>
                </button>
                <button aria-label="Lista de indicadores" className="flex w-[13px] items-center justify-center">
                    <svg viewBox="0 0 8 4" className="h-1 w-2"><path d="M.5 0h7L4 4z" /></svg>
                </button>
            </div>

            <button aria-label="Abrir panel" className="ml-auto">
                <svg viewBox="0 0 17 28" className="h-7 w-[17px]">
                    <path d="M18 .5H6L.5 8v12L6 27.500h12" fill="#eef3f6" stroke="#607884" /><path d="M8 1h9v26H8z" fill="#fff" />
                    <path d="M6 11v9l-4-4.500z" />
                    <path d="M16 4c-4 0-4 3-3 6" stroke="#f02828" strokeWidth="2.500" fill="none" /><path d="M8.500 9h8L13 14z" fill="#f02828" />
                    <path d="M9 25c5 0 5-3 4-6" stroke="#18a028" strokeWidth="2.500" fill="none" /><path d="M8.500 19.500h8L12.500 15z" fill="#18a028" />
                </svg>
            </button>
        </div>
    )
}

export default function App() {
    return (
        <div className="min-h-screen overflow-hidden bg-[#a8d0dc] font-['Liberation_Sans',Arial,sans-serif] text-black">
            <TitleBar />
            <main className="border-r-3 border-l-4 border-[#5c96f0]">
                <Toolbar />
                <Chart />
            </main>
            <div className="h-[3px] border-t border-[#728894] bg-[#a8d0dc]" />
        </div>
    )
}
